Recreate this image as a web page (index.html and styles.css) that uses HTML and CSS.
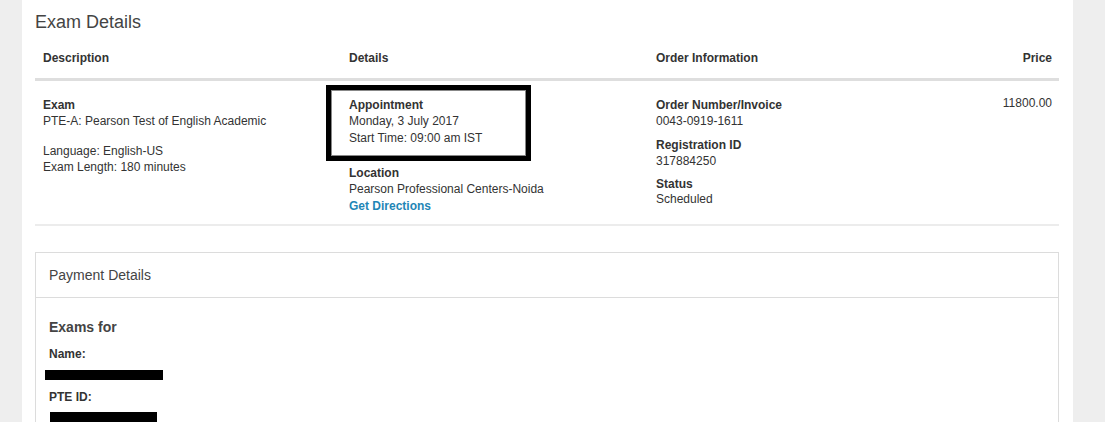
FILE: index.html
```html
<!DOCTYPE html>
<html>
<head>
<meta charset="utf-8">
<link rel="stylesheet" href="styles.css">
</head>
<body>
<div class="page">
  <h1 class="title">Exam Details</h1>
  <div class="table">
    <div class="row head">
      <div class="cell">Description</div>
      <div class="cell">Details</div>
      <div class="cell">Order Information</div>
      <div class="cell price">Price</div>
    </div>
    <div class="row body">
      <div class="cell">
        <div class="group">
          <div class="label">Exam</div>
          <div>PTE-A: Pearson Test of English Academic</div>
        </div>
        <div class="group g-lang">
          <div>Language: English-US</div>
          <div>Exam Length: 180 minutes</div>
        </div>
      </div>
      <div class="cell">
        <div class="group appt">
          <div class="label">Appointment</div>
          <div>Monday, 3 July 2017</div>
          <div class="start">Start Time: 09:00 am IST</div>
        </div>
        <div class="group g-loc">
          <div class="label">Location</div>
          <div>Pearson Professional Centers-Noida</div>
          <a class="link" href="#">Get Directions</a>
        </div>
      </div>
      <div class="cell">
        <div class="group">
          <div class="label">Order Number/Invoice</div>
          <div>0043-0919-1611</div>
        </div>
        <div class="group g-reg">
          <div class="label">Registration ID</div>
          <div>317884250</div>
        </div>
        <div class="group g-status">
          <div class="label">Status</div>
          <div class="sched">Scheduled</div>
        </div>
      </div>
      <div class="cell price amount">11800.00</div>
    </div>
  </div>

  <div class="panel">
    <div class="panel-head">Payment Details</div>
    <div class="panel-body">
      <div class="exams-for">Exams for</div>
      <div class="label field">Name:</div>
      <div class="redact-line"><span class="redact r1"></span></div>
      <div class="label field f2">PTE ID:</div>
      <div class="redact-line"><span class="redact r2"></span></div>
    </div>
  </div>
</div>
</body>
</html>
```

FILE: styles.css
```css
html, body {
  margin: 0;
  padding: 0;
  background: #eeeeee;
  height: 100%;
  overflow: hidden;
}
body {
  font-family: "Liberation Sans", Arial, sans-serif;
  color: #333;
}
.page {
  margin-left: 22px;
  width: 1051px;
  box-sizing: border-box;
  padding: 0 14px 0 13px;
  background: #fff;
  min-height: 100%;
}
.title {
  margin: 0;
  padding-top: 12px;
  font-size: 18px;
  line-height: 20px;
  font-weight: normal;
  color: #444;
}
.table {
  margin-top: 10px;
  font-size: 12px;
  line-height: 16px;
}
.row {
  display: grid;
  grid-template-columns: 306px 307px 307px 1fr;
}
.cell {
  padding: 0 8px;
}
.head {
  padding: 8px 0 12px;
  border-bottom: 3px solid #dedede;
  font-weight: bold;
}
.price {
  text-align: right;
  padding-right: 7px;
}
.body {
  padding: 16px 0 10px;
  border-bottom: 2px solid #ececec;
}
.amount {
  margin-top: -2px;
}
.label {
  font-weight: bold;
}
.g-lang {
  margin-top: 14px;
}
.appt {
  position: relative;
}
.appt::before {
  content: "";
  position: absolute;
  left: -23px;
  top: -12px;
  width: 195px;
  height: 66px;
  border: 5px solid #000;
  box-shadow: inset 0 0 0 1px #888;
}
.start {
  margin-top: 1px;
}
.g-loc {
  margin-top: 19px;
}
.link {
  display: block;
  color: #1f86b6;
  font-weight: bold;
  text-decoration: none;
  margin-top: 1px;
}
.g-reg {
  margin-top: 8px;
}
.g-status {
  margin-top: 7px;
}
.sched {
  margin-top: -1px;
}
.panel {
  margin-top: 26px;
  width: 1024px;
  box-sizing: border-box;
  border: 1px solid #dcdcdc;
  border-bottom: none;
}
.panel-head {
  padding: 12px 13px;
  font-size: 14px;
  line-height: 20px;
  color: #444;
  border-bottom: 1px solid #dcdcdc;
}
.panel-body {
  padding: 19px 13px 0;
  font-size: 12px;
  line-height: 16px;
}
.exams-for {
  font-size: 14px;
  line-height: 20px;
  font-weight: bold;
  color: #444;
}
.field {
  margin-top: 9px;
}
.f2 {
  margin-top: 3px;
}
.redact-line {
  height: 16px;
  position: relative;
}
.redact {
  display: block;
  background: #000;
  height: 10px;
}
.r1 {
  width: 118px;
  margin-left: -4px;
  margin-top: 8px;
}
.r2 {
  width: 107px;
  margin-left: 1px;
  margin-top: 7px;
}
```
